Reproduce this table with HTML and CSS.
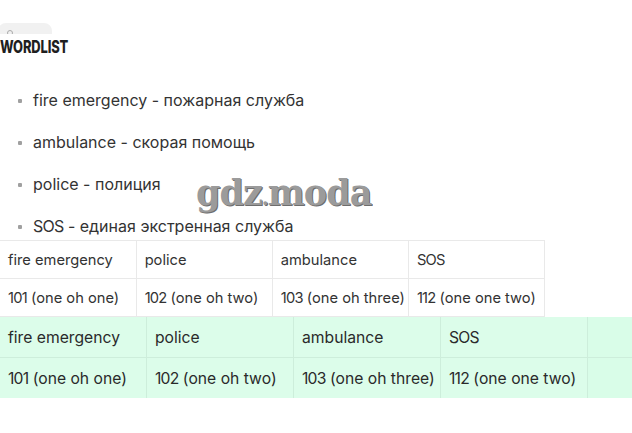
FILE: index.html
```html
<!DOCTYPE html>
<html>
<head>
<meta charset="utf-8">
<link rel="stylesheet" href="styles.css">
</head>
<body>
<div class="top">
  <div class="pill"><span class="pill-dot"></span></div>
</div>
<h2 class="title"><span class="title-text">WORDLIST</span></h2>
<ul class="words">
  <li>fire emergency - пожарная служба</li>
  <li>ambulance - скорая помощь</li>
  <li>police - полиция</li>
  <li><span class="caps">SOS</span> - единая экстренная служба</li>
</ul>
<div class="watermark">gdz<span class="wm-dot">.</span>moda</div>
<table class="t1">
  <tr><td>fire emergency</td><td>police</td><td>ambulance</td><td><span class="caps">SOS</span></td></tr>
  <tr><td><span class="num">101</span> (one oh one)</td><td><span class="num">102</span> (one oh two)</td><td><span class="num">103</span> (one oh three)</td><td><span class="num">112</span> (one one two)</td></tr>
</table>
<table class="t2">
  <tr><td>fire emergency</td><td>police</td><td>ambulance</td><td><span class="caps">SOS</span></td><td class="extra"></td></tr>
  <tr><td><span class="num">101</span> (one oh one)</td><td><span class="num">102</span> (one oh two)</td><td><span class="num">103</span> (one oh three)</td><td><span class="num">112</span> (one one two)</td><td class="extra"></td></tr>
</table>
</body>
</html>
```
FILE: styles.css
```css
html, body {
  margin: 0;
  padding: 0;
  background: #fff;
}
body {
  font-family: Inter, "Noto Sans", sans-serif;
  color: #2f2f2f;
  position: relative;
  width: 632px;
  height: 433px;
  overflow: hidden;
}
.top {
  padding-top: 23px;
}
.pill {
  width: 54px;
  height: 13px;
  margin-left: -2px;
  background: #f1f1f1;
  border-radius: 8px 8px 0 0;
  position: relative;
}
.pill-dot {
  position: absolute;
  left: 9px;
  top: 7px;
  width: 4px;
  height: 4px;
  border: 1px solid #aaa;
  border-radius: 50%;
}
.title {
  margin: -2px 0 0 0;
  padding-top: 3px;
  font-family: Inter, sans-serif;
  font-weight: 800;
  font-size: 17px;
  line-height: 20px;
  color: #1f1f1f;
  background: #fff;
  width: 70px;
  position: relative;
}
.title-text {
  display: inline-block;
  transform: scaleX(0.76);
  transform-origin: left center;
  letter-spacing: -0.2px;
}
.words {
  margin: 22px 0 -7px 0;
  padding: 0 0 0 33px;
  font-size: 16px;
  line-height: 42px;
  color: #333;
}
.words li {
  list-style: none;
  position: relative;
}
.words li::before {
  content: "";
  position: absolute;
  left: -15px;
  top: 20px;
  width: 4px;
  height: 4px;
  background: #a0a0a0;
  border-radius: 1px;
}
.caps, .num {
  letter-spacing: -0.8px;
}
.watermark {
  position: absolute;
  left: 196px;
  top: 171px;
  font-family: "DejaVu Serif", "Liberation Serif", serif;
  font-weight: bold;
  font-size: 35px;
  line-height: 44px;
  color: #8a8a8a;
  letter-spacing: -1px;
  text-shadow: 1px 1px 0 #555;
  opacity: 0.85;
}
.wm-dot {
  font-size: 20px;
}
table {
  border-collapse: collapse;
  table-layout: fixed;
}
.t1 {
  width: 545px;
  font-size: 14.7px;
  color: #333;
}
.t1 td {
  height: 37px;
  padding: 0 8px;
  border: 1px solid #e9e9e9;
  white-space: nowrap;
}
.t1 td:first-child {
  border-left: none;
}
.t2 {
  width: 640px;
  font-size: 15.7px;
  color: #2a2a2a;
  background: #dcfdea;
}
.t2 td {
  width: 130px;
  height: 40px;
  padding: 0 8px;
  border: 1px solid #cdeedb;
  white-space: nowrap;
}
.t2 tr:first-child td {
  border-top: none;
}
.t2 tr:last-child td {
  border-bottom: none;
}
.t2 td:first-child {
  border-left: none;
}
.t2 td.extra {
  width: 38px;
  background: #d9fde8;
}
```
